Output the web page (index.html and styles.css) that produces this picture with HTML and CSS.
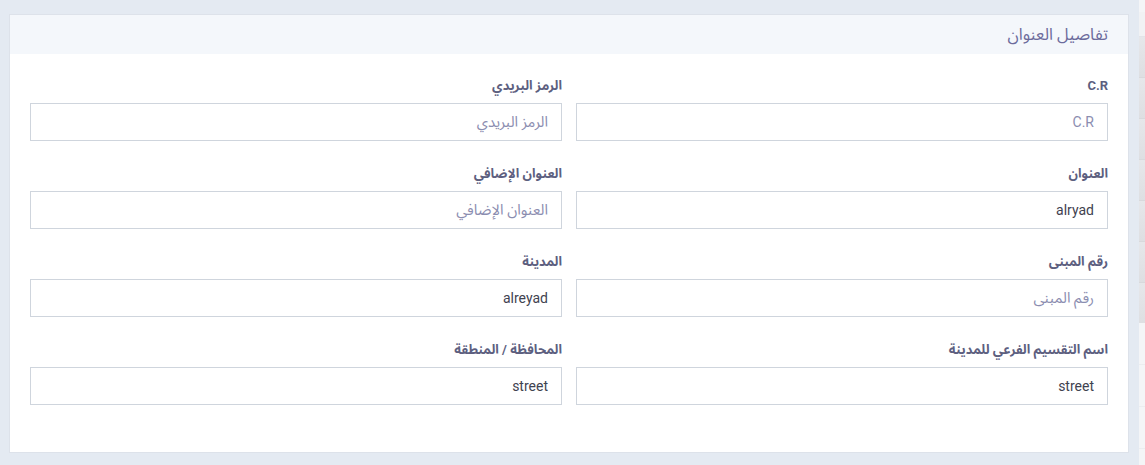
FILE: index.html
```html
<!DOCTYPE html>
<html lang="ar">
<head>
<meta charset="utf-8">
<title>تفاصيل العنوان</title>
<link rel="stylesheet" href="styles.css">
</head>
<body>
<div class="page">
  <section class="card" dir="rtl">
    <header class="card-header">تفاصيل العنوان</header>
    <div class="card-body">
      <div class="form-grid">
        <div class="form-group">
          <label class="form-label">C.R</label>
          <div class="form-input placeholder">C.R</div>
        </div>
        <div class="form-group">
          <label class="form-label">الرمز البريدي</label>
          <div class="form-input placeholder arabic">الرمز البريدي</div>
        </div>
        <div class="form-group">
          <label class="form-label">العنوان</label>
          <div class="form-input">alryad</div>
        </div>
        <div class="form-group">
          <label class="form-label">العنوان الإضافي</label>
          <div class="form-input placeholder arabic">العنوان الإضافي</div>
        </div>
        <div class="form-group">
          <label class="form-label">رقم المبنى</label>
          <div class="form-input placeholder arabic">رقم المبنى</div>
        </div>
        <div class="form-group">
          <label class="form-label">المدينة</label>
          <div class="form-input">alreyad</div>
        </div>
        <div class="form-group">
          <label class="form-label">اسم التقسيم الفرعي للمدينة</label>
          <div class="form-input">street</div>
        </div>
        <div class="form-group">
          <label class="form-label">المحافظة / المنطقة</label>
          <div class="form-input">street</div>
        </div>
      </div>
    </div>
  </section>
  <aside class="side-panel">
    <div class="side-top"></div>
    <div class="side-band"></div>
    <div class="side-bottom"></div>
  </aside>
</div>
</body>
</html>
```

FILE: styles.css
```css
* { box-sizing: border-box; }

html, body {
  margin: 0;
  padding: 0;
  height: 100%;
}

body {
  background: #e4eaf2;
  font-family: Roboto, "Noto Sans Arabic", "DejaVu Sans", sans-serif;
  overflow: hidden;
}

.page {
  display: flex;
  align-items: flex-start;
  padding: 14px 0 0 9px;
  gap: 10px;
}

.card {
  width: 1120px;
  height: 439px;
  background: #ffffff;
  border: 1px solid #dde2ea;
  flex: none;
}

.card-header {
  height: 39px;
  background: #f4f7fb;
  color: #6c6b9c;
  font-size: 16.5px;
  line-height: 39px;
  padding: 0 20px;
}

.card-body {
  padding: 22px 20px 0;
}

.form-grid {
  display: grid;
  grid-template-columns: 532px 532px;
  column-gap: 14px;
}

.form-group {
  display: flex;
  flex-direction: column;
  margin-bottom: 23px;
}

.form-label {
  font-size: 13px;
  font-weight: 700;
  line-height: 19px;
  color: #5d5f7f;
  margin-bottom: 8px;
}

.form-input {
  height: 38px;
  border: 1px solid #cfd5dd;
  padding: 0 13px;
  font-size: 14px;
  line-height: 36px;
  color: #3f4250;
}

.form-input.placeholder {
  color: #8b8db0;
}

.form-input.arabic {
  font-size: 14.8px;
}

.side-panel {
  flex: 1;
  height: 465px;
  margin-top: -14px;
  display: flex;
  flex-direction: column;
  background: #f4f5f7;
}

.side-top {
  height: 37px;
  border-top: 12px solid #f4f5f7;
  background: #f1f2f4;
  border-bottom: 1px solid #e2e4e8;
}

.side-band {
  height: 286px;
  background: repeating-linear-gradient(180deg, #e6e7ea 0, #dedfe2 40px, #d2d3d6 41px);
}

.side-bottom {
  flex: 1;
  background: repeating-linear-gradient(180deg, #f4f5f7 0, #f4f5f7 41px, #e3e5e8 42px);
}
```
